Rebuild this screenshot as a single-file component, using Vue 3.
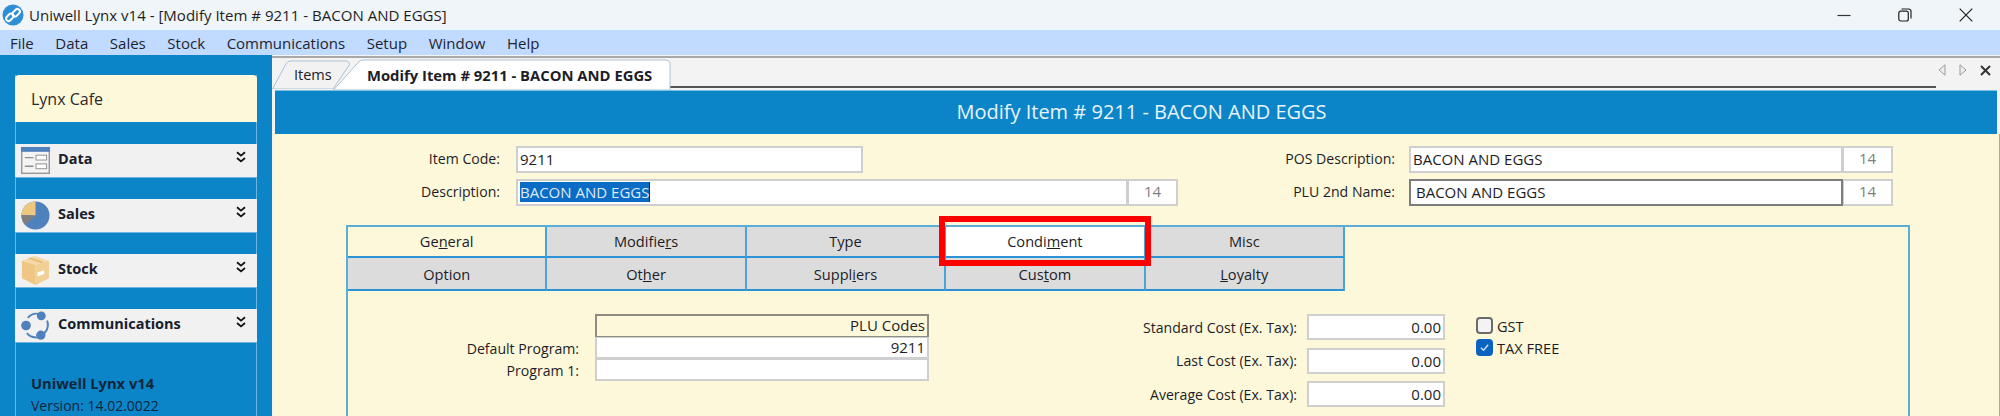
<script setup>
const menus = ['File', 'Data', 'Sales', 'Stock', 'Communications', 'Setup', 'Window', 'Help']
const navs = [
  { name: 'Data', icon: 'data' },
  { name: 'Sales', icon: 'pie' },
  { name: 'Stock', icon: 'box' },
  { name: 'Communications', icon: 'comm' }
]
const tabs = [
  { a: 'Ge', k: 'n', b: 'eral', cls: 'is-general' },
  { a: 'Modifie', k: 'r', b: 's' },
  { a: 'Type', k: '', b: '' },
  { a: 'Condi', k: 'm', b: 'ent', cls: 'is-condiment' },
  { a: 'Misc', k: '', b: '' },
  { a: 'Option', k: '', b: '' },
  { a: 'Ot', k: 'h', b: 'er' },
  { a: 'Suppl', k: 'i', b: 'ers' },
  { a: 'Cus', k: 't', b: 'om' },
  { a: '', k: 'L', b: 'oyalty' }
]
const costs = ['Standard Cost (Ex. Tax):', 'Last Cost (Ex. Tax):', 'Average Cost (Ex. Tax):']
</script>

<template>
  <div class="app">
    <header class="titlebar">
      <svg class="app-icon" viewBox="0 0 22 22" width="22" height="22">
        <circle cx="11" cy="11" r="10.5" fill="#2f8fd6" />
        <g fill="none" stroke="#fff" stroke-width="2">
          <rect x="3.6" y="10.8" width="8.4" height="5" rx="2.5" transform="rotate(-45 7.8 13.3)" />
          <rect x="10" y="6.2" width="8.4" height="5" rx="2.5" transform="rotate(-45 14.2 8.7)" />
        </g>
      </svg>
      <span class="title-text">Uniwell Lynx v14 - [Modify Item # 9211 - BACON AND EGGS]</span>
      <div class="win-controls">
        <svg viewBox="0 0 14 14" width="14" height="14"><path d="M0.5 7.5h13" stroke="#333" stroke-width="1.2" /></svg>
        <svg viewBox="0 0 14 14" width="14" height="14" fill="none" stroke="#222" stroke-width="1.2">
          <rect x="0.8" y="3.2" width="9.5" height="9.8" rx="2" />
          <path d="M3.4 1h7.2a2.4 2.4 0 0 1 2.4 2.4v7.2" />
        </svg>
        <svg viewBox="0 0 14 14" width="14" height="14"><path d="M0.7 0.7 13.3 13.3M13.3 0.7 0.7 13.3" stroke="#222" stroke-width="1.2" /></svg>
      </div>
    </header>

    <nav class="menubar">
      <span v-for="m in menus" :key="m">{{ m }}</span>
    </nav>

    <div class="workspace">
      <aside class="sidebar">
        <div class="panel">
          <div class="cafe">Lynx Cafe</div>
          <div class="navs">
            <div v-for="n in navs" :key="n.name" class="nav-row">
              <svg v-if="n.icon === 'data'" class="nav-icon" viewBox="0 0 30 28">
                <rect x="0.75" y="0.75" width="28.5" height="26.5" fill="#f4f4f4" stroke="#9a9a9a" stroke-width="1.5" />
                <rect x="0" y="0" width="30" height="5" fill="#4f81bd" />
                <path d="M4 11h9M4 20h9" stroke="#8f8f8f" stroke-width="1.4" />
                <rect x="15.5" y="8.5" width="11" height="5" fill="#fff" stroke="#8f8f8f" />
                <rect x="15.5" y="17.5" width="11" height="5" fill="#fff" stroke="#8f8f8f" />
              </svg>
              <svg v-else-if="n.icon === 'pie'" class="nav-icon" viewBox="0 0 30 30">
                <circle cx="15" cy="15" r="14.5" fill="#4f81bd" />
                <path d="M15 15V.5A14.5 14.5 0 0 0 .5 14.5Z" fill="#efc87f" />
                <path d="M15 15 .5 14.5A14.5 14.5 0 0 0 4.2 24.7Z" fill="#7f7f7f" />
              </svg>
              <svg v-else-if="n.icon === 'box'" class="nav-icon" viewBox="0 0 30 30">
                <path d="M15 9 29 5v18l-14 7Z" fill="#f1cf95" />
                <path d="M15 9 1 5v18l14 7Z" fill="#efc684" />
                <path d="M1 5 14 0l15 5-14 4Z" fill="#f5d9a8" />
                <path d="M7 2.6 21 7.4l3-.9L10 1.5Z" fill="#e8bd78" />
                <path d="M17 17l7-2.6v4.2l-7 2.6Z" fill="#fff" />
              </svg>
              <svg v-else class="nav-icon" viewBox="0 0 30 30">
                <path d="M7 7A12 12 0 0 1 20 3.5M27 10a12.5 12.5 0 0 1-3 13M18 27A12.5 12.5 0 0 1 6 23" fill="none" stroke="#4f81bd" stroke-width="2" />
                <circle cx="21" cy="5" r="4.6" fill="#4f81bd" />
                <circle cx="5.2" cy="15" r="5" fill="#4f81bd" />
                <circle cx="20.5" cy="25" r="4.8" fill="#4f81bd" />
              </svg>
              <span class="nav-name">{{ n.name }}</span>
              <svg class="chev" viewBox="0 0 10 12" width="10" height="12" fill="none" stroke="#111" stroke-width="1.8">
                <path d="M1 1.2 5 4.6 9 1.2M1 7 5 10.4 9 7" />
              </svg>
            </div>
          </div>
          <div class="about">
            <strong>Uniwell Lynx v14</strong>
            <span>Version: 14.02.0022</span>
          </div>
        </div>
      </aside>

      <main class="main">
        <div class="tabstrip">
          <div class="doc-tab doc-tab-items">
            <svg class="tab-bg" viewBox="0 0 78 31" preserveAspectRatio="none">
              <path d="M0.5 31 14 4Q15.5 1 19 1H72Q78 1 77.5 5L61 31Z" fill="#f2f2f2" stroke="#a9c1d2" />
            </svg>
            <span>Items</span>
          </div>
          <div class="doc-tab doc-tab-active">
            <svg class="tab-bg" viewBox="0 0 338 33" preserveAspectRatio="none">
              <path d="M0.5 33 25 4Q27 1 31 1H331Q337 1 337 5V33Z" fill="#fff" stroke="#a9c1d2" />
            </svg>
            <span>Modify Item # 9211 - BACON AND EGGS</span>
          </div>
          <div class="doc-nav">
            <svg viewBox="0 0 8 12" width="8" height="12" fill="#eee" stroke="#999"><path d="M7 0.8V11.2L1 6Z" /></svg>
            <svg viewBox="0 0 8 12" width="8" height="12" fill="#eee" stroke="#999"><path d="M1 0.8V11.2L7 6Z" /></svg>
            <svg viewBox="0 0 11 11" width="11" height="11"><path d="M1 1 10 10M10 1 1 10" stroke="#333" stroke-width="2" /></svg>
          </div>
        </div>

        <div class="banner">Modify Item # 9211 - BACON AND EGGS</div>

        <section class="body">
          <div class="top-form">
            <div class="form-left">
              <label>Item Code:</label>
              <div class="input input-short"><span>9211</span></div>
              <label>Description:</label>
              <div class="input-group">
                <div class="input input-fill"><span class="selected">BACON AND EGGS</span></div>
                <div class="counter">14</div>
              </div>
            </div>
            <div class="form-right">
              <label>POS Description:</label>
              <div class="input-group">
                <div class="input input-fill"><span>BACON AND EGGS</span></div>
                <div class="counter">14</div>
              </div>
              <label>PLU 2nd Name:</label>
              <div class="input-group">
                <div class="input input-fill input-focus"><span>BACON AND EGGS</span></div>
                <div class="counter">14</div>
              </div>
            </div>
          </div>

          <div class="tabbox">
            <div class="tabgrid">
              <div v-for="(t, i) in tabs" :key="i" class="cell" :class="[t.cls, i < 5 ? 'row-one' : '']">
                {{ t.a }}<u v-if="t.k">{{ t.k }}</u>{{ t.b }}
              </div>
            </div>

            <div class="pane">
              <div class="plu">
                <span></span>
                <div class="plu-head">PLU Codes</div>
                <label>Default Program:</label>
                <div class="plu-cell">9211</div>
                <label>Program 1:</label>
                <div class="plu-cell"></div>
              </div>

              <div class="cost-grid">
                <template v-for="c in costs" :key="c">
                  <label>{{ c }}</label>
                  <div class="cost-input">0.00</div>
                </template>
              </div>

              <div class="checks">
                <div class="check-row"><span class="box"></span>GST</div>
                <div class="check-row">
                  <span class="box box-on">
                    <svg viewBox="0 0 12 12" width="11" height="11" fill="none" stroke="#cfe3f7" stroke-width="1.5"><path d="M2 6.3 5 9l5-6" /></svg>
                  </span>TAX FREE
                </div>
              </div>
            </div>
          </div>
        </section>
      </main>
    </div>
  </div>
</template>

<style>
html, body { margin: 0; padding: 0; background: #fff; overflow: hidden; }
</style>

<style scoped>
.app {
  width: 2000px;
  height: 416px;
  display: flex;
  flex-direction: column;
  overflow: hidden;
  font-family: "Open Sans", "Noto Sans", sans-serif;
  font-size: 14.1px;
  color: #1d1d27;
}
.titlebar {
  height: 30px;
  flex: none;
  background: #eff5f9;
  display: flex;
  align-items: center;
  padding-left: 2px;
  box-sizing: border-box;
}
.app-icon { flex: none; }
.title-text { margin-left: 5px; font-size: 15.05px; color: #1f1f1f; }
.win-controls {
  margin-left: auto;
  display: flex;
  gap: 47px;
  padding-right: 27px;
  align-items: center;
}
.menubar {
  height: 25px;
  flex: none;
  background: #c1daff;
  display: flex;
  gap: 21.6px;
  align-items: center;
  padding-left: 10px;
  font-size: 15px;
  color: #1c2433;
}
.workspace { flex: 1; display: flex; min-height: 0; background: #0b85c8; }
.sidebar { width: 272px; flex: none; padding: 20px 0 0 15px; box-sizing: border-box; }
.panel {
  width: 242px;
  box-shadow: inset 1px 0 #6db5de, inset -1px 0 #6db5de;
  min-height: 400px;
}
.cafe {
  height: 47px;
  background: #fef8da;
  border-radius: 4px 4px 0 0;
  font-size: 16px;
  line-height: 48px;
  padding-left: 16px;
  color: #2a2a2a;
}
.navs { padding-top: 22px; display: flex; flex-direction: column; gap: 21px; }
.nav-row {
  height: 33px;
  background: #f1f1f1;
  border-bottom: 1px solid #6db5de;
  display: flex;
  align-items: center;
  padding-left: 6px;
  font-size: 14.5px;
  font-weight: 700;
  color: #17202c;
}
.nav-icon { width: 29px; height: 29px; flex: none; }
.nav-name { margin-left: 8px; margin-bottom: 4px; }
.chev { margin-left: auto; margin-right: 11px; margin-bottom: 8px; }
.about {
  margin-top: 31px;
  padding-left: 16px;
  display: flex;
  flex-direction: column;
  gap: 3px;
  font-size: 14px;
  line-height: 19px;
  color: #10263c;
}
.about strong { font-weight: 700; font-size: 14.7px; }

.main { flex: 1; display: flex; flex-direction: column; background: #f3f3f3; min-width: 0; }
.tabstrip {
  height: 33px;
  flex: none;
  margin-top: 1px;
  background: #f3f3f3;
  border-top: 2px solid #a8a8a8;
  box-sizing: border-box;
  display: flex;
  align-items: flex-end;
  position: relative;
}
.tabstrip::after {
  content: "";
  position: absolute;
  left: 398px;
  right: 64px;
  bottom: 1px;
  height: 2px;
  background: #555;
}
.doc-tab {
  position: relative;
  height: 29px;
  display: flex;
  align-items: center;
  font-size: 14.5px;
  white-space: nowrap;
}
.doc-tab span { position: relative; }
.tab-bg { position: absolute; inset: 0; width: 100%; height: 100%; }
.doc-tab-items { width: 78px; padding-left: 22px; box-sizing: border-box; }
.doc-tab-active {
  width: 338px;
  margin-left: -17px;
  padding-left: 34px;
  box-sizing: border-box;
  font-weight: 700;
  font-size: 14.8px;
  height: 31px;
  z-index: 1;
  margin-bottom: -1px;
}
.doc-nav {
  margin-left: auto;
  display: flex;
  align-items: center;
  gap: 13px;
  padding: 0 9px 7px 0;
  height: 20px;
  box-sizing: border-box;
  align-self: center;
}
.banner {
  height: 44px;
  flex: none;
  margin: 1px 3px 0 3px;
  padding-left: 11px;
  background: #0b85c8;
  border-top: 1px solid #7cc0e6;
  box-sizing: border-box;
  color: #e9f3fb;
  font-size: 20px;
  line-height: 41px;
  text-align: center;
}
.body {
  flex: 1;
  background: #fef8da;
  margin-left: 2px;
  border-right: 1px solid #a9a9a9;
  padding-top: 12px;
  box-sizing: border-box;
  min-height: 0;
}
.top-form { display: flex; height: 60px; }
.form-left {
  width: 904px;
  display: grid;
  grid-template-columns: 226px 1fr;
  column-gap: 16px;
  grid-auto-rows: 27px;
  row-gap: 6px;
  align-items: center;
}
.form-right {
  margin-left: auto;
  margin-right: 106px;
  display: grid;
  grid-template-columns: auto 484px;
  column-gap: 14px;
  grid-auto-rows: 27px;
  row-gap: 6px;
  align-items: center;
}
label { text-align: right; white-space: nowrap; }
.form-left label, .form-right label { padding-bottom: 2px; }
.input {
  height: 27px;
  box-sizing: border-box;
  background: #fff;
  border: 2px solid #cfcfcf;
  display: flex;
  align-items: center;
  padding: 0 0 2px 2px;
  font-size: 15px;
}
.input-short { width: 347px; }
.input-group { display: flex; }
.input-fill { flex: 1; min-width: 0; }
.input-focus { border: 2px solid #7d7d7d; padding-left: 5px; }
.counter {
  width: 50px;
  height: 27px;
  box-sizing: border-box;
  border: 2px solid #cfcfcf;
  border-left-width: 1px;
  background: #fff;
  color: #808080;
  text-align: center;
  line-height: 21px;
  font-size: 15px;
}
.selected { background: #0a6cc4; color: #dfeaf5; padding: 0; box-shadow: 1px 0 #222; }

.tabbox {
  margin: 19px 0 0 72px;
  width: 1564px;
  height: 210px;
  box-sizing: border-box;
  border: 2px solid #5aaed6;
  border-bottom: none;
}
.tabgrid {
  display: grid;
  grid-template-columns: repeat(5, 199.4px);
  grid-template-rows: 31px 33px;
  width: 997px;
}
.cell {
  background: #dcdcdc;
  border-right: 2px solid #4ba4d8;
  border-bottom: 2px solid #2c92d3;
  box-sizing: border-box;
  display: flex;
  align-items: center;
  justify-content: center;
  white-space: pre;
  font-size: 14.6px;
  position: relative;
}
.row-one { padding-bottom: 2px; }
.is-general { background: #fef8da; }
.is-condiment { background: #fff; z-index: 2; }
.is-condiment::after {
  content: "";
  position: absolute;
  left: -7px;
  right: -7px;
  top: -11px;
  bottom: -10px;
  border: 6px solid #f00;
  pointer-events: none;
}
.pane { display: flex; padding-top: 23px; align-items: flex-start; }
.plu {
  display: grid;
  grid-template-columns: 231px 334px;
  column-gap: 16px;
  grid-template-rows: 23px 22px 22px;
  align-items: center;
}
.plu-head {
  height: 23px;
  box-sizing: border-box;
  border: 2px solid #8d8d84;
  border-bottom-width: 1px;
  text-align: right;
  line-height: 19px;
  padding-right: 2px;
  font-size: 15px;
}
.plu-cell {
  height: 22px;
  box-sizing: border-box;
  background: #fff;
  border: 2px solid #cfcfcf;
  border-top-width: 1px;
  text-align: right;
  line-height: 18px;
  padding-right: 2px;
  font-size: 15px;
}
.cost-grid {
  margin-left: 168px;
  display: grid;
  grid-template-columns: 200px 138px;
  column-gap: 10px;
  grid-auto-rows: 26px;
  row-gap: 7.5px;
  align-items: center;
}
.cost-input {
  height: 26px;
  box-sizing: border-box;
  background: #fff;
  border: 2px solid #cfcfcf;
  text-align: right;
  line-height: 22px;
  padding-right: 2px;
  font-size: 15px;
}
.checks { margin-left: 31px; padding-top: 3px; display: flex; flex-direction: column; gap: 5px; }
.check-row { display: flex; align-items: center; gap: 4px; height: 17px; font-size: 14.6px; }
.box {
  width: 17px;
  height: 17px;
  box-sizing: border-box;
  border: 2px solid #6b6b6b;
  border-radius: 4px;
  background: #f3f3f3;
  display: flex;
  align-items: center;
  justify-content: center;
}
.box-on { background: #0a63c0; border-color: #0a63c0; }
</style>
